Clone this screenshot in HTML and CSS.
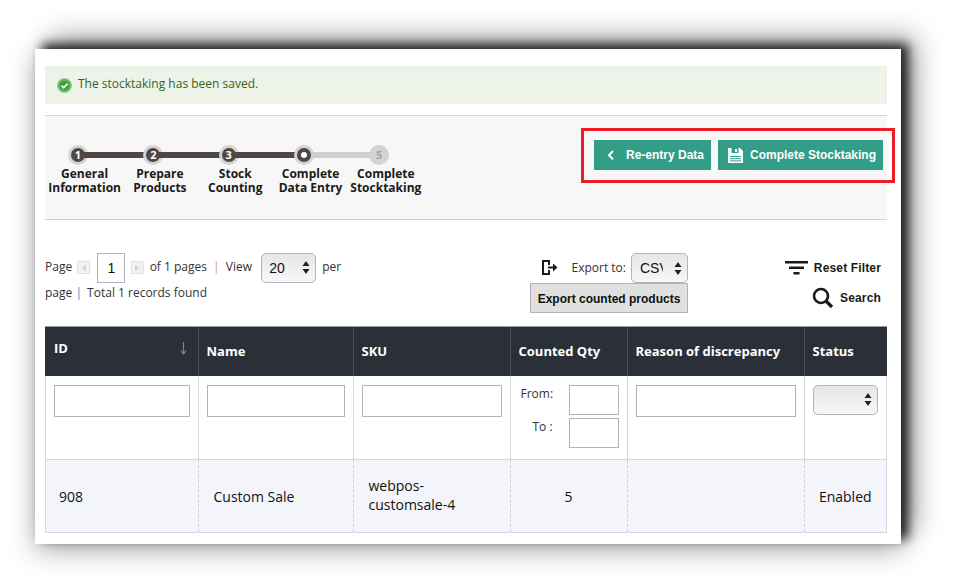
FILE: index.html
```html
<!DOCTYPE html>
<html>
  <head>
  <meta charset="utf-8">
  <link rel="stylesheet" href="styles.css">
  </head>
  <body>
    <div class="window">
      <div class="message">
        <svg class="msg_icon" width="15" height="15" viewBox="0 0 15 15">
          <circle cx="7.5" cy="7.5" r="7" fill="#5cb85c" stroke="#9ccf8e"/>
          <circle cx="7.5" cy="7.5" r="4.6" fill="#3f9a3f"/>
          <path d="M4.6 7.6l2.1 2.2 3.8-4.2" fill="none" stroke="#fff" stroke-width="1.7"/>
        </svg>
        The stocktaking has been saved.
      </div>

      <div class="panel">
        <div class="steps">
          <div class="step done"><div class="dot"><span>1</span></div><div class="label">General<br>Information</div></div>
          <div class="step done"><div class="dot"><span>2</span></div><div class="label">Prepare<br>Products</div></div>
          <div class="step done"><div class="dot"><span>3</span></div><div class="label">Stock<br>Counting</div></div>
          <div class="step current"><div class="dot"><span></span></div><div class="label">Complete<br>Data Entry</div></div>
          <div class="step last"><div class="dot"><span>5</span></div><div class="label">Complete<br>Stocktaking</div></div>
        </div>
        <div class="actions">
          <a class="btn btn_back">
            <svg width="8" height="12" viewBox="0 0 8 12"><path d="M6 2L2 6.2 6 10.4" fill="none" stroke="#fff" stroke-width="2"/></svg>
            Re-entry Data
          </a>
          <a class="btn btn_save">
            <svg width="17" height="17" viewBox="0 0 17 17">
              <path d="M1 1h12l3 3v12H1z" fill="#fff"/>
              <rect x="4.500" y="1" width="7" height="5" fill="#339e87"/>
              <rect x="8" y="2" width="2" height="3" fill="#fff"/>
              <path d="M3 9.500h11M3 11.700h11M3 13.900h11" stroke="#339e87" stroke-width="1"/>
            </svg>
            Complete Stocktaking
          </a>
        </div>
      </div>

      <div class="toolbar">
        <div class="pager">
          Page
          <span class="arrow_box"><i class="tri_left"></i></span>
          <input class="page_input" type="text" value="1">
          <span class="arrow_box"><i class="tri_right"></i></span>
          of 1 pages
          <span class="sep_orange">|</span>
          View
          <select class="sel sel_view"><option>20</option></select>
          per page
          <span class="sep_blue">|</span>
          Total 1 records found
        </div>
        <div class="export">
          <div class="export_top">
            <svg width="17" height="17" viewBox="0 0 17 17">
              <path d="M1 1h8v5H7V3H3v11h4v-3h2v5H1z" fill="#1a1a1a"/>
              <path d="M7 7.500h5V4.500l4.500 4-4.500 4v-3H7z" fill="#1a1a1a"/>
            </svg>
            <span class="export_label">Export to:</span>
            <select class="sel sel_csv"><option>CSV</option></select>
          </div>
          <button class="export_btn" type="button">Export counted products</button>
        </div>
        <div class="filters">
          <a class="filter_link">
            <svg width="23" height="14" viewBox="0 0 23 14"><path d="M0 1.200h23M4 6.700h15M8.500 12.300h6" stroke="#1a1a1a" stroke-width="2.500"/></svg>
            Reset Filter
          </a>
          <a class="filter_link">
            <svg width="22" height="22" viewBox="0 0 22 22"><circle cx="9" cy="9" r="7" fill="none" stroke="#1a1a1a" stroke-width="2.600"/><path d="M14 14l6 6" stroke="#1a1a1a" stroke-width="3.200"/></svg>
            Search
          </a>
        </div>
      </div>

      <table class="grid">
        <colgroup>
          <col class="c_id"><col class="c_name"><col class="c_sku"><col class="c_qty"><col class="c_reason"><col class="c_status">
        </colgroup>
        <tr class="head">
          <th class="th_id">ID<svg class="sort" width="7" height="13" viewBox="0 0 7 13"><path d="M3.500 0v11M1 8.500l2.500 3.500 2.500-3.500" fill="none" stroke="#7f838a" stroke-width="1.200"/></svg></th>
          <th>Name</th><th>SKU</th><th>Counted Qty</th><th>Reason of discrepancy</th><th>Status</th>
        </tr>
        <tr class="filter_row">
          <td><input class="f_id" type="text"></td>
          <td><input class="f_name" type="text"></td>
          <td><input class="f_sku" type="text"></td>
          <td>
            <div class="range"><label>From:</label><input type="text"></div>
            <div class="range"><label class="to">To :</label><input type="text"></div>
          </td>
          <td><input class="f_reason" type="text"></td>
          <td><select class="sel sel_status"><option></option></select></td>
        </tr>
        <tr class="data_row">
          <td class="d_id">908</td>
          <td class="d_name">Custom Sale</td>
          <td class="d_sku">webpos-customsale-4</td>
          <td class="d_center">5</td>
          <td></td>
          <td class="d_center">Enabled</td>
        </tr>
      </table>

      <div class="highlight"></div>
    </div>
  </body>
</html>
```

FILE: styles.css
```css
body {
  box-sizing: border-box;
  height: 583px;
  margin: 0;
  padding: 49px 0 0 35px;
  background-color: #fff;
  font-family: "Open Sans", "Liberation Sans", sans-serif;
}
.window {
  position: relative;
  box-sizing: border-box;
  width: 866px;
  height: 495px;
  padding: 17px 14px 0 10px;
  background-color: #fff;
  box-shadow: 7px -5px 10px 0 rgba(0,0,0,.8), 0 7px 26px rgba(0,0,0,.3), 16px -14px 26px rgba(0,0,0,.3);
}
.message {
  display: flex;
  align-items: center;
  gap: 6px;
  box-sizing: border-box;
  height: 38px;
  padding: 0 0 4px 12px;
  background-color: #eef3ea;
  color: #38621a;
  font-size: 12px;
}
.msg_icon { margin-top: 4px; }

.panel {
  display: flex;
  justify-content: space-between;
  box-sizing: border-box;
  height: 105px;
  margin-top: 11px;
  padding: 24px 4px 0 2px;
  background-color: #f7f7f7;
  border-top: 1px solid #d4d4d4;
  border-bottom: 1px solid #d4d4d4;
}
.steps {
  display: flex;
  padding-top: 5px;
}
.step { width: 75.3px; }
.dot {
  position: relative;
  box-sizing: border-box;
  width: 20px;
  height: 20px;
  margin-left: 21px;
  padding: 3px;
  border-radius: 50%;
  background-color: #d3d3d3;
}
.dot span {
  position: relative;
  z-index: 1;
  display: block;
  width: 14px;
  height: 14px;
  border-radius: 50%;
  background-color: #4f4743;
  color: #fff;
  font-size: 11px;
  font-weight: bold;
  line-height: 14px;
  text-align: center;
}
.dot::after {
  content: "";
  position: absolute;
  left: 10px;
  top: 7px;
  width: 75.3px;
  height: 6px;
  background-color: #d0d0d0;
}
.step.done .dot::after {
  background-color: #4f4743;
}
.step.last .dot::after { display: none; }
.step.current .dot span {
  box-sizing: border-box;
  border: 4px solid #4f4743;
  background-color: #fff;
}
.step.last .dot span {
  background-color: #d3d3d3;
  color: #a2a2a2;
}
.label {
  margin-top: 2px;
  color: #1a1a1a;
  font-size: 12px;
  font-weight: bold;
  line-height: 14px;
  text-align: center;
  white-space: nowrap;
}
.actions {
  display: flex;
  gap: 7px;
}
.btn {
  display: flex;
  align-items: center;
  height: 30px;
  background-color: #339e87;
  color: #fff;
  font-family: "Liberation Sans", sans-serif;
  font-size: 12px;
  font-weight: bold;
}
.btn_back {
  gap: 11px;
  width: 117px;
  box-sizing: border-box;
  padding-left: 13px;
}
.btn_save {
  gap: 6px;
  width: 165px;
  box-sizing: border-box;
  padding-left: 9px;
}

.toolbar {
  display: flex;
  height: 106px;
}
.pager {
  box-sizing: border-box;
  width: 310px;
  padding-top: 34px;
  color: #333;
  font-size: 12px;
  line-height: 25px;
}
.page_input {
  box-sizing: border-box;
  width: 28px;
  height: 30px;
  margin: -3px 0 -3px 3px;
  padding: 0;
  border: 1px solid #b0b2bc;
  color: #111;
  font-family: "Liberation Sans", sans-serif;
  font-size: 14px;
  text-align: center;
  vertical-align: middle;
}
.arrow_box {
  display: inline-flex;
  align-items: center;
  justify-content: center;
  box-sizing: border-box;
  width: 13px;
  height: 13px;
  margin: 0 3px 0 2px;
  border: 1px solid #e2e2e2;
  background-color: #f2f2f2;
  vertical-align: middle;
}
.arrow_box:first-of-type { margin-right: 1px; }
.tri_left, .tri_right {
  width: 0;
  height: 0;
  border-top: 3px solid transparent;
  border-bottom: 3px solid transparent;
}
.tri_left { border-right: 4px solid #d0d0d0; }
.tri_right { border-left: 4px solid #d0d0d0; }
.sep_orange { margin: 0 3px; color: #d8a24a; }
.sep_blue { margin: 0 2px 0 0; color: #4a8ac0; }

.sel {
  appearance: none;
  -webkit-appearance: none;
  box-sizing: border-box;
  height: 30px;
  border: 1px solid #b0b2bc;
  border-radius: 5px;
  color: #111;
  font-family: "Liberation Sans", sans-serif;
  font-size: 14px;
  vertical-align: middle;
  background-color: #eee;
  background-image: url("data:image/svg+xml,%3Csvg xmlns='http://www.w3.org/2000/svg' width='8' height='13'%3E%3Cpath d='M4 0l3.500 5H.5zM4 13L.5 8h7z' fill='%23222'/%3E%3C/svg%3E"), linear-gradient(#e6e6e6, #f8f8f8);
  background-repeat: no-repeat;
  background-position: right 5px center, 0 0;
}
.sel_view {
  width: 55px;
  margin: -3px 3px -3px 6px;
  padding: 0 20px 0 7px;
}
.export {
  display: flex;
  flex-direction: column;
  align-items: flex-end;
  width: 333px;
  padding-top: 33px;
}
.export_top {
  display: flex;
  align-items: center;
  height: 30px;
  color: #333;
  font-size: 12px;
}
.export_top svg { margin: 0 14px 2px 0; }
.export_label { margin: 0 5px 2px 0; }
.sel_csv {
  width: 57px;
  padding: 0 24px 0 8px;
}
.export_btn {
  box-sizing: border-box;
  width: 158px;
  height: 30px;
  padding-top: 2px;
  border: 1px solid #b0b2bc;
  background-color: #e0e0e0;
  color: #111;
  font-family: "Liberation Sans", sans-serif;
  font-size: 12px;
  font-weight: bold;
}
.filters {
  flex: 1;
  display: flex;
  flex-direction: column;
  align-items: flex-end;
  gap: 8px;
  padding: 37px 6px 0 0;
}
.filter_link {
  display: flex;
  align-items: center;
  gap: 6px;
  height: 22px;
  color: #1a1a1a;
  font-family: "Liberation Sans", sans-serif;
  font-size: 12px;
  font-weight: bold;
  letter-spacing: .15px;
}

.grid {
  width: 842px;
  border-collapse: collapse;
  table-layout: fixed;
  color: #111;
  font-size: 14px;
}
.c_id { width: 152.500px; }
.c_name { width: 155px; }
.c_sku { width: 157px; }
.c_qty { width: 117px; }
.c_reason { width: 177px; }
.head th {
  height: 49px;
  padding: 0 0 0 8px;
  box-sizing: border-box;
  background-color: #2b2f38;
  border-left: 1px solid #4a4e57;
  border-top: 1px solid #9a9ca3;
  color: #fff;
  font-size: 13px;
  font-weight: bold;
  text-align: left;
}
.head .th_id {
  position: relative;
  padding-bottom: 6px;
  border-left: 1px solid #2b2f38;
}
.sort {
  position: absolute;
  top: 15px;
  right: 11px;
}
.filter_row td {
  box-sizing: border-box;
  height: 84px;
  padding: 9px 0 0 8px;
  border: 1px solid #d4d6da;
  border-top: none;
  vertical-align: top;
}
.filter_row input {
  box-sizing: border-box;
  display: block;
  height: 32px;
  padding: 0;
  border: 1px solid #b0b2bc;
}
.f_id { width: 136px; }
.f_name { width: 138px; }
.f_sku { width: 140px; }
.f_reason { width: 160px; }
.range {
  display: flex;
  justify-content: space-between;
  width: 100px;
  margin-bottom: 3px;
  font-size: 12px;
  color: #333;
}
.range label { padding: 0 0 0 2px; line-height: 18px; }
.range label.to { padding: 0 0 0 14px; }
.filter_row .range input {
  width: 50px;
  height: 30px;
}
.sel_status {
  display: block;
  width: 65px;
}
.data_row td {
  box-sizing: border-box;
  height: 73px;
  background-color: #f3f5fa;
  border: 1px solid #d4d6e2;
  border-left: 1px dashed #d0d0d4;
  border-right: 1px dashed #d0d0d4;
}
.data_row td:first-child { border-left: 1px solid #d4d6e2; }
.data_row td:last-child { border-right: 1px solid #d4d6e2; }
.d_id { padding-left: 13px; }
.d_name { padding-left: 15px; }
.d_sku { padding: 0 30px 2px 15px; line-height: 19px; }
.d_center { text-align: center; }

.highlight {
  position: absolute;
  left: 546px;
  top: 79px;
  width: 314px;
  height: 55px;
  box-sizing: border-box;
  border: 3px solid #ee1c25;
}
```
